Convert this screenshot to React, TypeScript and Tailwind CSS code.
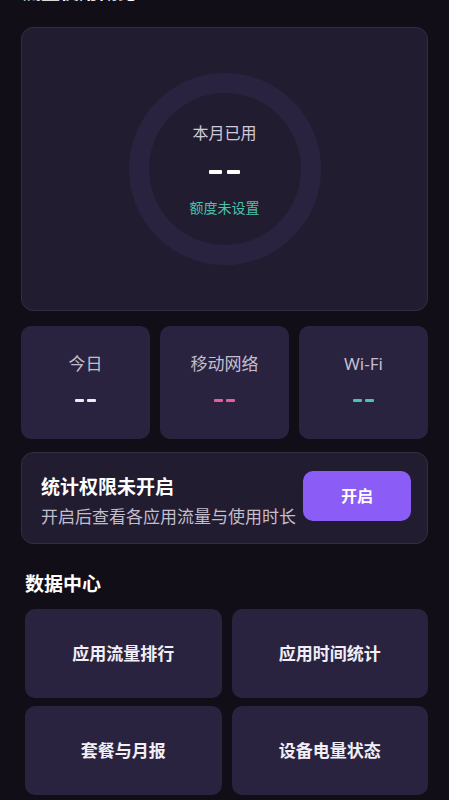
import React from "react";

const font = { fontFamily: '"Noto Sans", "Noto Sans CJK SC", sans-serif' };

export default function App() {
  return (
    <div className="min-h-[800px] w-[449px] overflow-hidden bg-[#110e17] text-white" style={font}>
      <div className="h-[27px] overflow-hidden relative">
        <div className="absolute left-[22px] top-[-20px] text-[19px] font-bold text-white leading-[24px]">流量使用概览</div>
      </div>
      <div className="px-[21px]">
        {/* main card */}
        <div className="h-[284px] rounded-[12px] border border-[#332c42] bg-[#221c30] flex items-center justify-center">
          <div className="w-[192px] h-[192px] rounded-full bg-[#2a2340] flex items-center justify-center">
            <div className="w-[152px] h-[152px] rounded-full bg-[#221c30] flex flex-col items-center justify-center">
              <div className="text-[16px] text-[#cfcad8] leading-[20px] mt-[2px]">本月已用</div>
              <div className="flex gap-[5px] mt-[27px]">
                <span className="block w-[13px] h-[4px] bg-white rounded-[1px]" />
                <span className="block w-[13px] h-[4px] bg-white rounded-[1px]" />
              </div>
              <div className="text-[14px] text-[#4cc2a9] leading-[20px] mt-[24px]">额度未设置</div>
            </div>
          </div>
        </div>

        {/* three stats */}
        <div className="grid grid-cols-3 gap-[10px] mt-[15px]">
          {[
            { t: "今日", c: "bg-[#eeeaf5]" },
            { t: "移动网络", c: "bg-[#e3609b]" },
            { t: "Wi-Fi", c: "bg-[#4cc2b0]" },
          ].map((s) => (
            <div key={s.t} className="h-[113px] rounded-[10px] bg-[#2a2340] flex flex-col items-center">
              <div className="text-[17px] text-[#c3becd] leading-[22px] mt-[27px]">{s.t}</div>
              <div className="flex gap-[3px] mt-[24px]">
                <span className={"block w-[9px] h-[3px] rounded-[1px] " + s.c} />
                <span className={"block w-[9px] h-[3px] rounded-[1px] " + s.c} />
              </div>
            </div>
          ))}
        </div>

        {/* permission card */}
        <div className="mt-[13px] h-[92px] rounded-[12px] border border-[#332c42] bg-[#221c30] flex items-center pl-[19px] pr-[16px]">
          <div className="flex-1 min-w-0 pt-[6px]">
            <div className="text-[19px] font-bold leading-[24px] text-white">统计权限未开启</div>
            <div className="text-[17px] leading-[22px] text-[#c3becd] mt-[7px] whitespace-nowrap">开启后查看各应用流量与使用时长</div>
          </div>
          <div className="w-[108px] h-[50px] rounded-[10px] bg-[#8b5cf6] flex items-center justify-center text-[16px] font-bold text-white shrink-0 -mt-[4px]">开启</div>
        </div>

        <div className="mt-[27px] pl-[4px] text-[19px] font-bold leading-[26px] text-white">数据中心</div>

        <div className="grid grid-cols-2 gap-x-[10px] gap-y-[8px] mt-[12px] pl-[4px]">
          {["应用流量排行", "应用时间统计", "套餐与月报", "设备电量状态"].map((t) => (
            <div key={t} className="h-[89px] rounded-[10px] bg-[#2a2340] flex items-center justify-center text-[17px] font-bold text-[#f1eef6]">
              {t}
            </div>
          ))}
        </div>
      </div>
    </div>
  );
}
